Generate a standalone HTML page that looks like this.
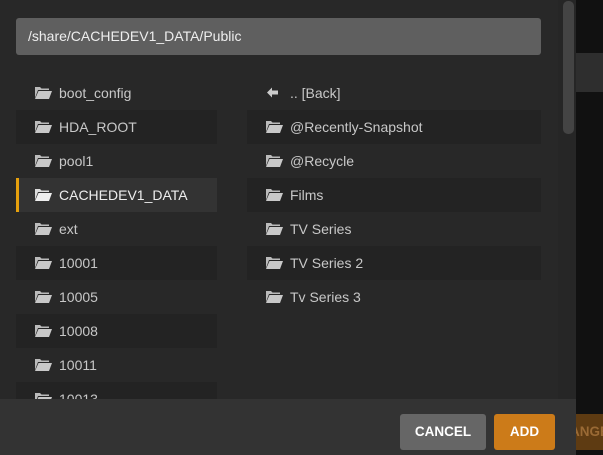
<!DOCTYPE html>
<html><head><style>
body{margin:0;width:603px;height:455px;background:#111;overflow:hidden;position:relative;font-family:"Liberation Sans",sans-serif;font-size:14px;color:#c8c8c8}
.dlg{position:absolute;left:0;top:0;width:576px;height:455px;background:#282828}
.band{position:absolute;left:576px;top:53px;width:27px;height:39px;background:#2e2e2e}
.sb{position:absolute;left:563px;top:1px;width:11px;height:133px;background:#444;border-radius:5px}
.track{position:absolute;left:558px;top:0;width:18px;height:399px;background:#262626}
.path{position:absolute;left:16px;top:18px;width:525px;height:37px;background:#5f5f5f;border-radius:3px;color:#eee;line-height:37px;padding-left:12px;box-sizing:border-box;font-size:14px}
.row{position:absolute;height:34px;line-height:34px;box-sizing:border-box;padding-left:19px;white-space:nowrap}
.row svg{position:absolute;top:10px;left:19px}
.row span{position:absolute;left:43px}
.l{left:16px;width:201px}.r{left:247px;width:294px}
.d{background:#232323}
.sel{background:#333;color:#eee}
.sel:before{content:"";position:absolute;left:0;top:0;width:3px;height:34px;background:#e5a00d}
.foot{position:absolute;left:0;top:399px;width:576px;height:56px;background:#333}
.btn{position:absolute;top:414px;height:36px;line-height:36px;text-align:center;color:#fff;font-weight:bold;font-size:13.5px;border-radius:3px}
</style></head><body>
<div class="dlg"></div>
<div class="band"></div>
<div class="track"></div>
<div class="sb"></div>
<div class="path">/share/CACHEDEV1_DATA/Public</div>

<div id="rows"></div>
<div class="row l" style="top:76px"><svg width="17" height="13" viewBox="0 0 17 13"><path d="M0 1h5l1.5 1.5H14V4H3L0 12z" fill="#bbb"/><path d="M3.5 5H17l-3 8H0z" fill="#c8c8c8"/></svg><span>boot_config</span></div>
<div class="row l d" style="top:110px"><svg width="17" height="13" viewBox="0 0 17 13"><path d="M0 1h5l1.5 1.5H14V4H3L0 12z" fill="#bbb"/><path d="M3.5 5H17l-3 8H0z" fill="#c8c8c8"/></svg><span>HDA_ROOT</span></div>
<div class="row l" style="top:144px"><svg width="17" height="13" viewBox="0 0 17 13"><path d="M0 1h5l1.5 1.5H14V4H3L0 12z" fill="#bbb"/><path d="M3.5 5H17l-3 8H0z" fill="#c8c8c8"/></svg><span>pool1</span></div>
<div class="row l sel" style="top:178px"><svg width="17" height="13" viewBox="0 0 17 13"><path d="M0 1h5l1.5 1.5H14V4H3L0 12z" fill="#ddd"/><path d="M3.5 5H17l-3 8H0z" fill="#eee"/></svg><span>CACHEDEV1_DATA</span></div>
<div class="row l" style="top:212px"><svg width="17" height="13" viewBox="0 0 17 13"><path d="M0 1h5l1.5 1.5H14V4H3L0 12z" fill="#bbb"/><path d="M3.5 5H17l-3 8H0z" fill="#c8c8c8"/></svg><span>ext</span></div>
<div class="row l d" style="top:246px"><svg width="17" height="13" viewBox="0 0 17 13"><path d="M0 1h5l1.5 1.5H14V4H3L0 12z" fill="#bbb"/><path d="M3.5 5H17l-3 8H0z" fill="#c8c8c8"/></svg><span>10001</span></div>
<div class="row l" style="top:280px"><svg width="17" height="13" viewBox="0 0 17 13"><path d="M0 1h5l1.5 1.5H14V4H3L0 12z" fill="#bbb"/><path d="M3.5 5H17l-3 8H0z" fill="#c8c8c8"/></svg><span>10005</span></div>
<div class="row l d" style="top:314px"><svg width="17" height="13" viewBox="0 0 17 13"><path d="M0 1h5l1.5 1.5H14V4H3L0 12z" fill="#bbb"/><path d="M3.5 5H17l-3 8H0z" fill="#c8c8c8"/></svg><span>10008</span></div>
<div class="row l" style="top:348px"><svg width="17" height="13" viewBox="0 0 17 13"><path d="M0 1h5l1.5 1.5H14V4H3L0 12z" fill="#bbb"/><path d="M3.5 5H17l-3 8H0z" fill="#c8c8c8"/></svg><span>10011</span></div>
<div class="row l d" style="top:382px"><svg width="17" height="13" viewBox="0 0 17 13"><path d="M0 1h5l1.5 1.5H14V4H3L0 12z" fill="#bbb"/><path d="M3.5 5H17l-3 8H0z" fill="#c8c8c8"/></svg><span>10013</span></div>

<div class="row r" style="top:76px"><svg width="17" height="13" viewBox="0 0 17 13"><path d="M1 6.5L6 1.5V4.5H12V8.5H6V11.5z" fill="#ccc"/></svg><span>.. [Back]</span></div>
<div class="row r d" style="top:110px"><svg width="17" height="13" viewBox="0 0 17 13"><path d="M0 1h5l1.5 1.5H14V4H3L0 12z" fill="#bbb"/><path d="M3.5 5H17l-3 8H0z" fill="#c8c8c8"/></svg><span>@Recently-Snapshot</span></div>
<div class="row r" style="top:144px"><svg width="17" height="13" viewBox="0 0 17 13"><path d="M0 1h5l1.5 1.5H14V4H3L0 12z" fill="#bbb"/><path d="M3.5 5H17l-3 8H0z" fill="#c8c8c8"/></svg><span>@Recycle</span></div>
<div class="row r d" style="top:178px"><svg width="17" height="13" viewBox="0 0 17 13"><path d="M0 1h5l1.5 1.5H14V4H3L0 12z" fill="#bbb"/><path d="M3.5 5H17l-3 8H0z" fill="#c8c8c8"/></svg><span>Films</span></div>
<div class="row r" style="top:212px"><svg width="17" height="13" viewBox="0 0 17 13"><path d="M0 1h5l1.5 1.5H14V4H3L0 12z" fill="#bbb"/><path d="M3.5 5H17l-3 8H0z" fill="#c8c8c8"/></svg><span>TV Series</span></div>
<div class="row r d" style="top:246px"><svg width="17" height="13" viewBox="0 0 17 13"><path d="M0 1h5l1.5 1.5H14V4H3L0 12z" fill="#bbb"/><path d="M3.5 5H17l-3 8H0z" fill="#c8c8c8"/></svg><span>TV Series 2</span></div>
<div class="row r" style="top:280px"><svg width="17" height="13" viewBox="0 0 17 13"><path d="M0 1h5l1.5 1.5H14V4H3L0 12z" fill="#bbb"/><path d="M3.5 5H17l-3 8H0z" fill="#c8c8c8"/></svg><span>Tv Series 3</span></div>

<div class="foot"></div>
<div class="btn" style="left:400px;width:86px;background:#666">CANCEL</div>
<div class="btn" style="left:494px;width:61px;background:#cc7b19">ADD</div>
<div style="position:absolute;left:576px;top:414px;width:27px;height:36px;background:#5e3b12;color:#9a6a35;font-weight:bold;font-size:13.5px;line-height:36px;overflow:hidden;white-space:nowrap;text-indent:-6px">ANGE</div>
</body></html>
